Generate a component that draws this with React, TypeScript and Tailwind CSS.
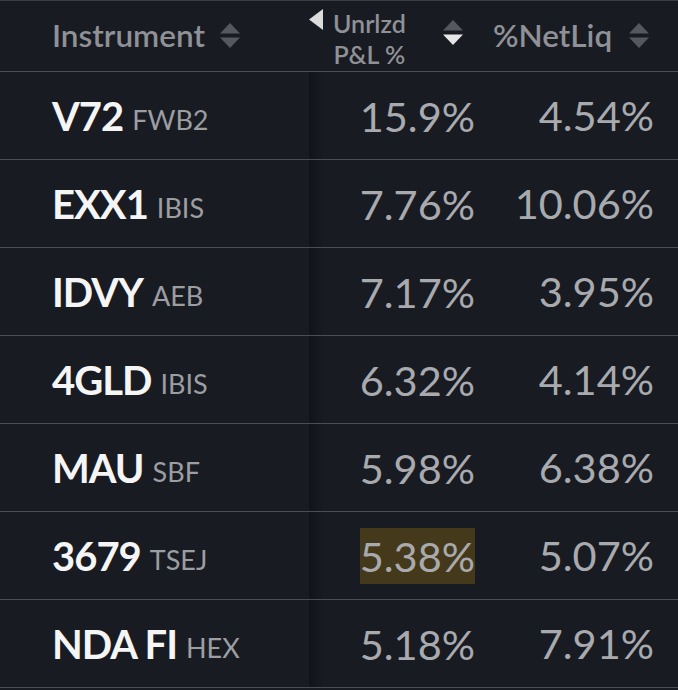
import React from "react";

type Row = {
  symbol: string;
  exchange: string;
  pnl: string;
  netLiq: string;
  flash?: boolean;
};

const rows: Row[] = [
  { symbol: "V72", exchange: "FWB2", pnl: "15.9%", netLiq: "4.54%" },
  { symbol: "EXX1", exchange: "IBIS", pnl: "7.76%", netLiq: "10.06%" },
  { symbol: "IDVY", exchange: "AEB", pnl: "7.17%", netLiq: "3.95%" },
  { symbol: "4GLD", exchange: "IBIS", pnl: "6.32%", netLiq: "4.14%" },
  { symbol: "MAU", exchange: "SBF", pnl: "5.98%", netLiq: "6.38%" },
  { symbol: "3679", exchange: "TSEJ", pnl: "5.38%", netLiq: "5.07%", flash: true },
  { symbol: "NDA FI", exchange: "HEX", pnl: "5.18%", netLiq: "7.91%" },
];

function SortIcon({ active }: { active?: "down" }) {
  return (
    <svg width="20" height="26" viewBox="0 0 20 26" className="shrink-0">
      <path d="M10 0 L20 10.5 L0 10.5 Z" fill="#55585e" />
      <path
        d="M0 14.5 L20 14.5 L10 25 Z"
        fill={active === "down" ? "#e6e6e6" : "#55585e"}
      />
    </svg>
  );
}

export default function App() {
  return (
    <div
      className="w-[678px] h-[690px] overflow-hidden bg-[#181b22] border-t border-[#3a3d43]"
      style={{ fontFamily: "Lato, 'Noto Sans', sans-serif" }}
    >
      {/* header */}
      <div className="flex h-[71px] border-b border-[#4a4d52]">
        <div className="w-[309px] flex items-center pl-[52px] gap-[15px]">
          <span className="text-[31.5px] font-semibold text-[#8f9196]">
            Instrument
          </span>
          <SortIcon />
        </div>
        <div className="w-[181px] flex items-start pt-[7px]">
          <svg width="14" height="21" viewBox="0 0 14 21" className="mt-[1px] shrink-0">
            <path d="M14 0 L14 21 L0 10.5 Z" fill="#dcdcdc" />
          </svg>
          <div className="ml-[10px] flex flex-col items-center text-[25px] leading-[31px] font-semibold text-[#8f9196]">
            <span>Unrlzd</span>
            <span>P&amp;L %</span>
          </div>
          <div className="ml-[37px] mt-[12px]">
            <SortIcon active="down" />
          </div>
        </div>
        <div className="flex-1 flex items-center pl-[3px] gap-[17px]">
          <span className="text-[31.5px] font-semibold text-[#8f9196]">%NetLiq</span>
          <SortIcon />
        </div>
      </div>

      {/* rows */}
      {rows.map((r) => (
        <div key={r.symbol} className="flex h-[88px] border-b border-[#4a4d52]">
          <div className="w-[309px] flex items-center pl-[52px] gap-[9px]">
            <span className="text-[40px] font-bold text-[#f5f5f5] leading-none tracking-[-1px]">
              {r.symbol}
            </span>
            <span className="text-[27px] text-[#9c9ea2] leading-none mt-[8px]">
              {r.exchange}
            </span>
          </div>
          <div className="w-[181px] flex items-center justify-end pr-[15px] bg-gradient-to-r from-[#111318] to-[#181b22] to-[8%]">
            <span
              className={
                "text-[41.5px] text-[#a8aaae] leading-[56px] " +
                (r.flash ? "bg-[#45391b]" : "")
              }
            >
              {r.pnl}
            </span>
          </div>
          <div className="flex-1 flex items-center justify-end pr-[24px]">
            <span className="text-[41.5px] text-[#a8aaae] leading-none">
              {r.netLiq}
            </span>
          </div>
        </div>
      ))}
    </div>
  );
}
